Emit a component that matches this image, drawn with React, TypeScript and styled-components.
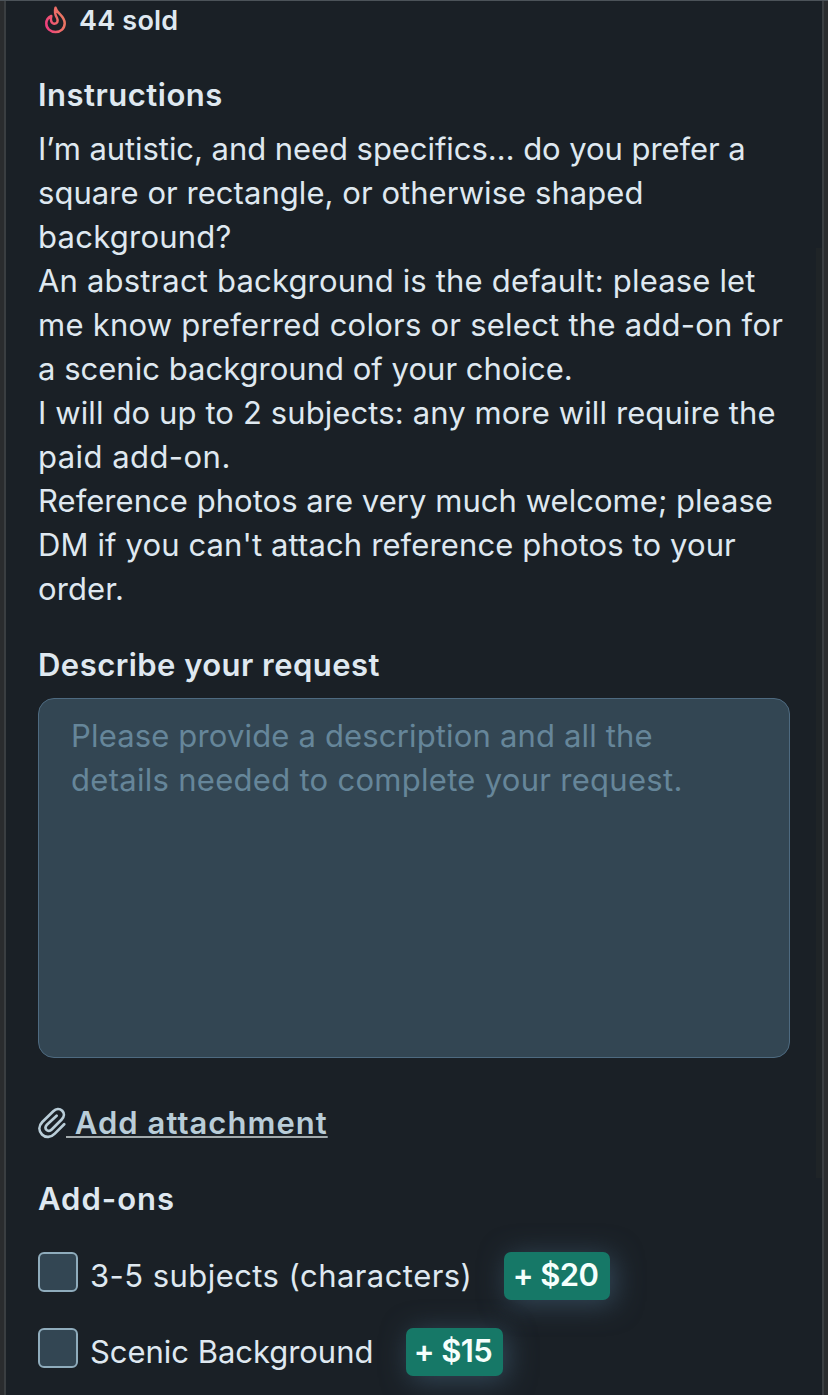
import React from 'react';
import styled, { createGlobalStyle } from 'styled-components';

const GlobalStyle = createGlobalStyle`
  * { box-sizing: border-box; }
  body {
    margin: 0;
    background: #1a2026;
    color: #dfe8f0;
    font-family: Inter, "Liberation Sans", sans-serif;
    font-size: 31px;
    line-height: 44px;
  }
`;

const Frame = styled.main`
  display: flex;
  height: 1395px;
  overflow: hidden;
  border-top: 1px solid #4c5359;
`;

const Edge = styled.div<{ $side: 'left' | 'right' }>`
  flex: none;
  width: 6px;
  background: #2a2c2e;
  ${p => (p.$side === 'left' ? 'border-right' : 'border-left')}: 2px solid #3a3e41;
`;

const Panel = styled.section`
  flex: 1;
  min-width: 0;
  padding: 0 32px;
  background: #1a2026;
`;

const ScrollThumb = styled.div`
  position: absolute;
  left: 816px;
  top: 248px;
  width: 6px;
  height: 930px;
  background: #1f2427;
`;

const Sold = styled.div`
  display: flex;
  align-items: center;
  height: 40px;
  padding-left: 5px;
  gap: 11px;
  font-size: 27px;
  font-weight: 600;
  letter-spacing: 0.2px;
`;

const Heading = styled.h2<{ $top: number; $tracking: number }>`
  margin: ${p => p.$top}px 0 0;
  font-size: 31px;
  font-weight: 600;
  line-height: 44px;
  letter-spacing: ${p => p.$tracking}px;
`;

const Copy = styled.p`
  margin: 10px 0 0;
`;

const Line = styled.span<{ $tracking: number }>`
  display: block;
  white-space: nowrap;
  letter-spacing: ${p => p.$tracking}px;
`;

const RequestBox = styled.div`
  height: 360px;
  margin-top: 11px;
  padding: 15px 32px;
  border: 1px solid #4e6a80;
  border-radius: 16px;
  background: #334653;
  color: #66869a;
`;

const Attach = styled.a`
  display: flex;
  align-items: center;
  width: max-content;
  margin-top: 43px;
  color: #b9cdd8;
  font-weight: 600;
  letter-spacing: 1.03px;
`;

const AttachLabel = styled.span`
  white-space: pre;
  text-decoration: underline;
  text-decoration-color: #a3abad;
  text-decoration-thickness: 2px;
  text-underline-offset: 2px;
  text-decoration-skip-ink: none;
`;

const Options = styled.div`
  display: flex;
  flex-direction: column;
  gap: 28px;
  margin-top: 31px;
`;

const Option = styled.label`
  display: flex;
  align-items: flex-start;
  height: 48px;
`;

const Box = styled.span`
  width: 40px;
  height: 40px;
  border: 2px solid #8facbc;
  border-radius: 6px;
  background: #334653;
`;

const OptionText = styled.span<{ $width: number; $tracking: number }>`
  width: ${p => p.$width}px;
  margin: 2px 0 0 12px;
  white-space: nowrap;
  letter-spacing: ${p => p.$tracking}px;
`;

const Price = styled.span<{ $width: number }>`
  width: ${p => p.$width}px;
  height: 48px;
  padding-right: 3px;
  border-radius: 7px;
  background: #167867;
  box-shadow: 4px 4px 28px #34495a;
  color: #f5fffc;
  font-weight: 600;
  line-height: 46px;
  letter-spacing: -0.6px;
  text-align: center;
`;

const instructions: [string, number][] = [
  ['I’m autistic, and need specifics… do you prefer a', -0.06],
  ['square or rectangle, or otherwise shaped', 0.05],
  ['background?', 0.25],
  ['An abstract background is the default: please let', 0.17],
  ['me know preferred colors or select the add-on for', 0.24],
  ['a scenic background of your choice.', 0.02],
  ['I will do up to 2 subjects: any more will require the', 0.11],
  ['paid add-on.', 0.45],
  ['Reference photos are very much welcome; please', 0.04],
  ["DM if you can't attach reference photos to your", 0.12],
  ['order.', 0.1],
];

const addOns = [
  { name: '3-5 subjects (characters)', tracking: 0.44, width: 414, price: '+ $20', priceWidth: 106 },
  { name: 'Scenic Background', tracking: -0.04, width: 316, price: '+ $15', priceWidth: 97 },
];

const FlameIcon = () => (
  <svg width="25" height="32" viewBox="0 0 25 32" fill="none">
    <defs>
      <linearGradient id="flame" x1="0" y1="0.700" x2="1" y2="0.300">
        <stop offset="0" stopColor="#ee3f7c" />
        <stop offset="0.600" stopColor="#ee6c68" />
        <stop offset="1" stopColor="#e87860" />
      </linearGradient>
    </defs>
    <path
      d="M12.500 2.800C13.500 8.500 21.700 10.500 21.700 18.300C21.700 23.500 17.800 27 12.600 27C7.300 27 3.300 23.500 3.300 18.500C3.300 15.200 5 12.500 8.300 11C7.200 15 8.300 18.700 11.500 18.700C14.300 18.700 15.500 16 14 13C12.200 9.800 11.300 6.500 12.500 2.800Z"
      stroke="url(#flame)"
      strokeWidth="2.500"
      strokeLinecap="round"
      strokeLinejoin="round"
    />
  </svg>
);

const ClipIcon = () => (
  <svg width="28" height="32" viewBox="0 0 28 32" fill="none">
    <path
      d="M26.200 17.200L16.800 26.600C13 30.600 7.500 31 4 27.500C0.400 23.800 0.700 18.800 4.300 15L15.300 4.200C18 1.500 21.600 1.300 24.200 3.700C26.600 6.200 26.400 9.800 23.700 12.500L13.700 22.500C12 24.200 9.800 24.200 8.500 22.900C7 21.400 7.200 19.400 8.900 17.700L18.600 8.700"
      stroke="#b9cdd8"
      strokeWidth="2.700"
      strokeLinecap="round"
      strokeLinejoin="round"
    />
  </svg>
);

export default function App() {
  return (
    <>
      <GlobalStyle />
      <Frame>
        <Edge $side="left" />
        <Panel>
          <Sold><FlameIcon />44 sold</Sold>
          <Heading $top={32} $tracking={0.5}>Instructions</Heading>
          <Copy>
            {instructions.map(([text, tracking]) => <Line key={text} $tracking={tracking}>{text}</Line>)}
          </Copy>
          <Heading $top={32} $tracking={0.46}>Describe your request</Heading>
          <RequestBox>
            <Line $tracking={0.16}>Please provide a description and all the</Line>
            <Line $tracking={0.29}>details needed to complete your request.</Line>
          </RequestBox>
          <Attach><ClipIcon /><AttachLabel> Add attachment</AttachLabel></Attach>
          <Heading $top={32} $tracking={1}>Add-ons</Heading>
          <Options>
            {addOns.map(a => (
              <Option key={a.name}>
                <Box />
                <OptionText $width={a.width} $tracking={a.tracking}>{a.name}</OptionText>
                <Price $width={a.priceWidth}>{a.price}</Price>
              </Option>
            ))}
          </Options>
        </Panel>
        <Edge $side="right" />
      </Frame>
      <ScrollThumb />
    </>
  );
}
